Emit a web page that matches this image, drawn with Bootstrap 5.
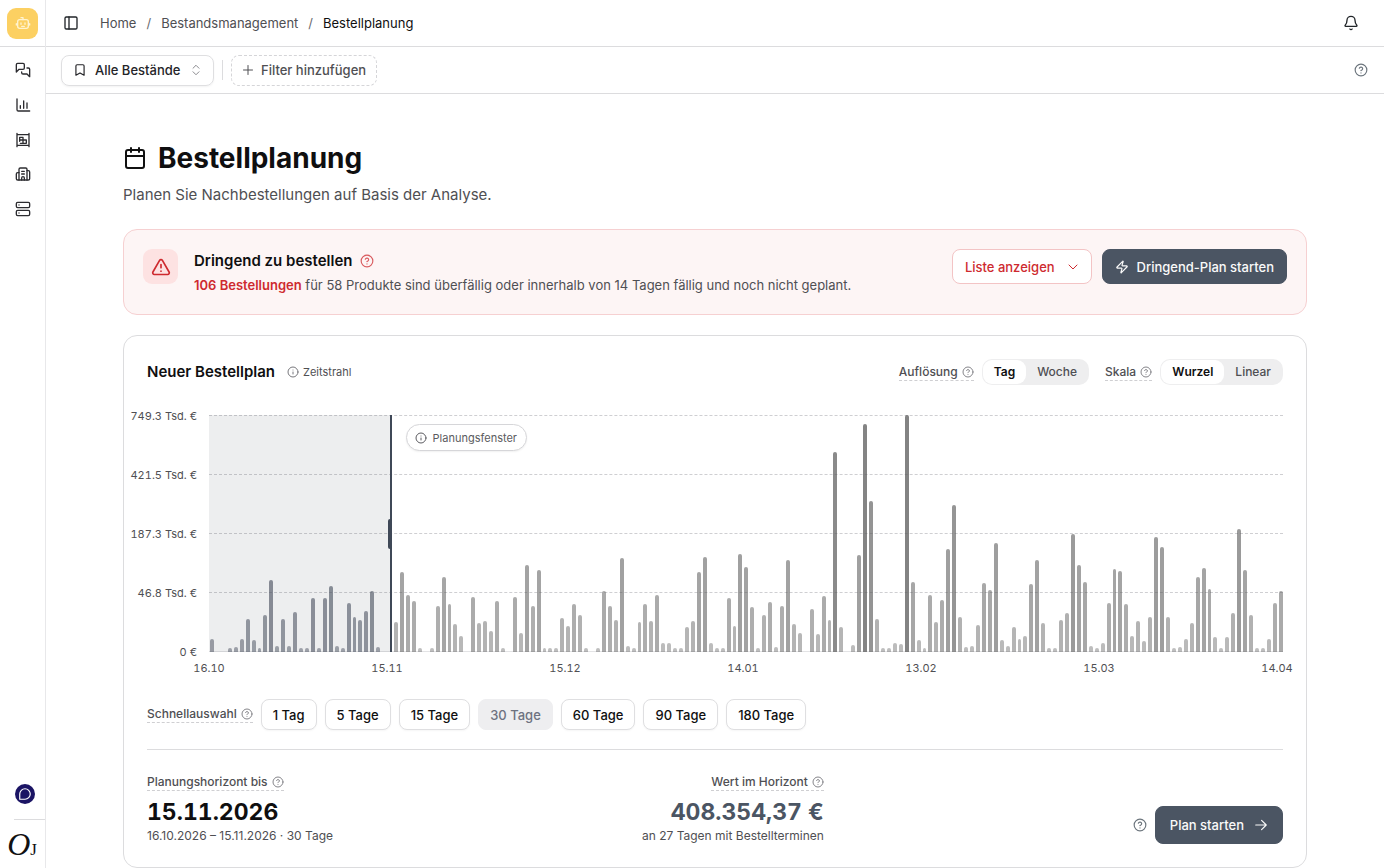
<!DOCTYPE html>
<html lang="de">
<head>
<meta charset="utf-8">
<meta name="viewport" content="width=device-width, initial-scale=1">
<title>Bestellplanung</title>
<link href="https://cdn.jsdelivr.net/npm/bootstrap@5.3.0/dist/css/bootstrap.min.css" rel="stylesheet">
<style>
  :root { --ink: #0f0f10; --body: #4f4f53; --line: #dcdcde; --slate: #4b5563; --red: #ce2a2f; }
  body { font-family: Inter, "Liberation Sans", sans-serif; font-size: 13px; line-height: 20px; color: var(--body); background: #fff; }
  svg.ico { fill: none; stroke: currentColor; stroke-width: 2; stroke-linecap: round; stroke-linejoin: round; flex: none; width: 16px; height: 16px; display: block; }
  svg.ico-12 { width: 12px; height: 12px; }
  svg.ico-14 { width: 14px; height: 14px; }
  svg.ico-20 { width: 20px; height: 20px; }
  svg.ico-24 { width: 24px; height: 24px; }
  a { color: inherit; text-decoration: none; }

  .side { width: 46px; border-right: 1px solid #e8e8ea; color: #2c2c30; height: 100vh; top: 0; }
  .side-top { height: 47px; border-bottom: 1px solid var(--line); }
  .bot { width: 31px; height: 31px; border-radius: 9px; background: #fcd062; color: #fff3cf; }
  .side-nav { padding-top: 15px; height: 170px; }
  .chat { width: 20px; height: 20px; background: #1b1464; color: #fff; margin-left: 4px; }
  .side-rule { width: 31px; border-top: 1px solid var(--line); margin: 15px 0 10px; }
  .brand { font-family: "Liberation Serif", serif; font-style: italic; font-size: 32px; line-height: 28px; color: #111; height: 38px; padding-right: 1px; }
  .brand small { font-size: 17px; font-style: normal; }

  .topbar { height: 47px; border-bottom: 1px solid var(--line); padding: 0 25px 0 17px; }
  .crumbs { --bs-breadcrumb-item-padding-x: 10px; --bs-breadcrumb-divider-color: #6b6b70; margin-left: 21px; }
  .crumbs .active { color: var(--ink); }
  .filterbar { height: 47px; border-bottom: 1px solid var(--line); padding: 0 16px 0 15px; gap: 8px; }
  .picker { height: 31px; border: 1px solid #dfdfe1; border-radius: 8px; padding: 0 11px; color: #242428; box-shadow: 0 1px 2px rgba(0,0,0,.05); }
  .picker select { appearance: none; border: 0; background: none; padding: 0; color: inherit; font-weight: 500; outline: 0; margin: 0 9px 0 8px; }
  .picker .ico:last-child { color: #8b8b90; }
  .divide { width: 1px; height: 20px; background: var(--line); }
  .add { height: 31px; border: 1px dashed #d5d5d8; border-radius: 8px; background: none; padding: 0 10px; gap: 7px; font-weight: 500; color: var(--body); }

  .content { padding: 46px 77px 0; }
  h1 { font-size: 28px; line-height: 36px; font-weight: 700; color: var(--ink); margin: 0; }
  .cal { stroke-width: 1.800; color: #111; }
  .title-row { gap: 11px; }
  .lead-in { font-size: 15px; line-height: 24px; margin: 7px 0 22px; }
  .urgent { background: #fdf5f5; border: 1px solid #f6d0d1; border-radius: 14px; padding: 19px; }
  .warn { width: 35px; height: 35px; border-radius: 9px; background: #fde2e2; color: var(--red); }
  .urgent h2 { font-size: 15px; line-height: 24px; font-weight: 600; color: var(--ink); margin: 0; }
  .urgent-text { margin-top: 2px; }
  .red { color: var(--red); }
  .acts { gap: 10px; }
  .b-act { height: 35px; border-radius: 8px; font-size: 13px; font-weight: 500; line-height: 20px; padding: 0 12px; gap: 8px; border: 1px solid #f3c4c5; background: #fff; color: var(--red); }
  .b-list { gap: 12px; }
  .b-dark { background: var(--slate); border-color: var(--slate); color: #fafafa; }
  .b-big { height: 38px; padding: 0 14px; gap: 10px; }

  .plan { border: 1px solid var(--line); border-radius: 14px; margin-top: 20px; padding: 23px; }
  .plan h2 { font-size: 15px; line-height: 24px; font-weight: 600; color: var(--ink); margin: 0; }
  .hint { width: fit-content; font-size: 12px; font-weight: 500; line-height: 16px; border-bottom: 1px dashed #cfcfd2; gap: 4px; color: var(--body); }
  .hint .ico { color: #85858a; }
  .tiny { font-size: 11px; line-height: 16px; }
  .tiny .ico { color: #77777c; }
  .seg { background: #eeeeef; border-radius: 10px; padding: 1px; height: 26px; }
  .seg label { font-size: 12px; font-weight: 500; line-height: 24px; border-radius: 9px; padding: 0 11px; cursor: pointer; }
  .seg .btn-check:checked + label { background: #fff; color: var(--ink); font-weight: 600; }

  .chart { margin: 30px 0 0 -14px; font-size: 11px; line-height: 16px; }
  .yaxis, .xaxis, .big { font-variant-numeric: tabular-nums; }
  .yaxis { width: 64px; margin: -7px 12px -8px 0; text-align: right; white-space: nowrap; }
  .yaxis span { display: flex; justify-content: flex-end; }
  .plot { height: 237px; }
  .rows div { border-top: 1px dashed #cfcfd2; height: 1px; }
  .rows div:last-child { border-top: 1px solid #e3e3e5; }
  .win { top: 0; bottom: 0; left: 0; width: 17%; background: rgba(75,85,99,.1); border-right: 2px solid #3f4857; }
  .grip { position: absolute; right: -2px; top: 44%; width: 4px; height: 30px; border-radius: 2px; background: #3f4857; }
  .bars i { flex: 1 1 0; min-width: 0; padding: 0 1px; }
  .bars i::before { content: ""; display: block; height: 100%; border-radius: 2px 2px 0 0; background: #555; opacity: var(--o); }
  .bars i.in::before { background: #4b5261; }
  .tip { left: 14px; margin-left: 17%; top: 9px; height: 27px; border: 1px solid #d6d6d9; border-radius: 14px; background: #fff; padding: 0 9px 0 8px; gap: 6px; color: #5b5b60; box-shadow: 0 1px 2px rgba(0,0,0,.06); }
  .xaxis { margin: 8px 0 0 76px; padding-right: calc((100% - 76px) / 181); }
  .xaxis span { width: 0; display: flex; justify-content: center; }

  .quick { margin-top: 23px; gap: 8px; }
  .quick button { height: 31px; border: 1px solid #dfdfe1; border-radius: 8px; background: #fff; color: var(--ink); font-weight: 500; padding: 0 11px; box-shadow: 0 1px 2px rgba(0,0,0,.04); }
  .quick button.on { background: #eeeef0; border-color: #eeeef0; color: #6d7280; box-shadow: none; }
  .foot { border-top: 1px solid var(--line); margin-top: 19px; padding-top: 24px; }
  .big { font-size: 23px; line-height: 32px; font-weight: 700; color: var(--ink); margin-top: 5px; }
  .big.slate { color: var(--slate); }
  .sub { font-size: 12px; line-height: 16px; }
</style>
</head>
<body>
<svg class="d-none" aria-hidden="true">
  <symbol id="q" viewBox="0 0 24 24"><circle cx="12" cy="12" r="10"/><path d="M9.1 9a3 3 0 0 1 5.8 1c0 2-3 3-3 3M12 17h.01"/></symbol>
  <symbol id="info" viewBox="0 0 24 24"><circle cx="12" cy="12" r="10"/><path d="M12 16v-4M12 8h.01"/></symbol>
</svg>
<div class="d-flex min-vh-100">
  <aside class="side sticky-top d-flex flex-column align-items-center flex-shrink-0">
    <div class="side-top w-100 d-flex align-items-center justify-content-center">
      <a href="#" class="bot d-flex align-items-center justify-content-center" aria-label="Assistent"><svg class="ico" viewBox="0 0 24 24"><path d="M12 7V4H9"/><rect x="4" y="7" width="16" height="13" rx="3"/><path d="M2 13v2M22 13v2M9 12v2M15 12v2M10 17h4"/></svg></a>
    </div>
    <nav class="side-nav d-flex flex-column justify-content-between">
      <a href="#" aria-label="Chat"><svg class="ico" viewBox="0 0 24 24"><path d="M14 9a2 2 0 0 1-2 2H6l-4 4V4a2 2 0 0 1 2-2h8a2 2 0 0 1 2 2z"/><path d="M18 9h2a2 2 0 0 1 2 2v11l-4-4h-6a2 2 0 0 1-2-2v-1"/></svg></a>
      <a href="#" aria-label="Analyse"><svg class="ico" viewBox="0 0 24 24"><path d="M3 3v16a2 2 0 0 0 2 2h17M8 17v-4M13 17V6M18 17V9"/></svg></a>
      <a href="#" aria-label="Lager"><svg class="ico" viewBox="0 0 24 24"><path d="M3 2v20M21 2v20M3 4h18M3 20h18M7 14V8h5v4h5v4M7 12h5M12 16v-4M8 17h9"/></svg></a>
      <a href="#" aria-label="Unternehmen"><svg class="ico" viewBox="0 0 24 24"><path d="M10 12h4M10 8h4M14 21v-3a2 2 0 0 0-4 0v3"/><path d="M6 10H4a2 2 0 0 0-2 2v7a2 2 0 0 0 2 2h16a2 2 0 0 0 2-2V9a2 2 0 0 0-2-2h-2"/><path d="M6 21V5a2 2 0 0 1 2-2h8a2 2 0 0 1 2 2v16"/></svg></a>
      <a href="#" aria-label="Daten"><svg class="ico" viewBox="0 0 24 24"><rect x="2" y="2" width="20" height="8" rx="2"/><rect x="2" y="14" width="20" height="8" rx="2"/><path d="M6 6h.01M6 18h.01"/></svg></a>
    </nav>
    <a href="#" class="chat rounded-circle d-flex align-items-center justify-content-center mt-auto" aria-label="Hilfe"><svg class="ico ico-14" viewBox="0 0 24 24"><path d="M3 21V12a9 9 0 1 1 9 9z"/></svg></a>
    <div class="side-rule align-self-end"></div>
    <a href="#" class="brand">O<small>J</small></a>
  </aside>

  <div class="flex-grow-1" style="min-width:0">
    <header class="topbar d-flex align-items-center">
      <button class="btn p-0 border-0" aria-label="Seitenleiste"><svg class="ico" viewBox="0 0 24 24"><rect x="3" y="3" width="18" height="18" rx="2"/><path d="M9 3v18"/></svg></button>
      <nav aria-label="breadcrumb"><ol class="breadcrumb crumbs mb-0">
        <li class="breadcrumb-item"><a href="#">Home</a></li>
        <li class="breadcrumb-item"><a href="#">Bestandsmanagement</a></li>
        <li class="breadcrumb-item active" aria-current="page">Bestellplanung</li>
      </ol></nav>
      <button class="btn p-0 border-0 ms-auto" aria-label="Benachrichtigungen"><svg class="ico" viewBox="0 0 24 24"><path d="M10.3 21a2 2 0 0 0 3.4 0"/><path d="M3.3 15.3A1 1 0 0 0 4 17h16a1 1 0 0 0 .7-1.7C19.4 14 18 12.500 18 8A6 6 0 0 0 6 8c0 4.500-1.400 6-2.700 7.300"/></svg></button>
    </header>

    <div class="filterbar d-flex align-items-center">
      <div class="picker d-flex align-items-center">
        <svg class="ico ico-14" viewBox="0 0 24 24"><path d="M19 21l-7-4-7 4V5a2 2 0 0 1 2-2h10a2 2 0 0 1 2 2z"/></svg>
        <select aria-label="Bestände"><option>Alle Bestände</option></select>
        <svg class="ico ico-12" viewBox="0 0 24 24"><path d="M6 15.500l6 6 6-6M6 8.500l6-6 6 6"/></svg>
      </div>
      <div class="divide"></div>
      <button class="add d-flex align-items-center"><svg class="ico ico-12" viewBox="0 0 24 24"><path d="M3 12h18M12 3v18"/></svg>Filter hinzufügen</button>
      <button class="btn p-0 border-0 ms-auto text-secondary" aria-label="Hilfe"><svg class="ico ico-14"><use href="#q"/></svg></button>
    </div>

    <main class="content">
      <div class="title-row d-flex align-items-center">
        <svg class="ico ico-24 cal" viewBox="0 0 24 24"><path d="M8 2v4M16 2v4M3 10h18"/><rect x="3" y="4" width="18" height="18" rx="2"/></svg>
        <h1>Bestellplanung</h1>
      </div>
      <p class="lead-in">Planen Sie Nachbestellungen auf Basis der Analyse.</p>

      <section class="urgent d-flex align-items-start">
        <div class="warn d-flex align-items-center justify-content-center flex-shrink-0 me-3"><svg class="ico ico-20" viewBox="0 0 24 24"><path d="M21.700 18l-8-14a2 2 0 0 0-3.400 0l-8 14A2 2 0 0 0 4 21h16a2 2 0 0 0 1.700-3zM12 9v4M12 17h.01"/></svg></div>
        <div class="flex-grow-1">
          <div class="d-flex align-items-center"><h2>Dringend zu bestellen</h2><svg class="ico ico-14 red ms-2 opacity-75"><use href="#q"/></svg></div>
          <div class="urgent-text"><strong class="red fw-semibold">106 Bestellungen</strong> für 58 Produkte sind überfällig oder innerhalb von 14 Tagen fällig und noch nicht geplant.</div>
        </div>
        <div class="acts d-flex flex-shrink-0">
          <button class="b-act b-list d-flex align-items-center">Liste anzeigen<svg class="ico ico-12" viewBox="0 0 24 24"><path d="M4 8l8 8 8-8"/></svg></button>
          <button class="b-act b-dark d-flex align-items-center"><svg class="ico ico-14" viewBox="0 0 24 24"><path d="M4 14a1 1 0 0 1-.8-1.600l9.900-10.200a.5.5 0 0 1 .9.500L12.100 8.700A1 1 0 0 0 13 10h7a1 1 0 0 1 .8 1.600l-9.900 10.200a.5.5 0 0 1-.9-.5l1.900-6A1 1 0 0 0 11 14z"/></svg>Dringend-Plan starten</button>
        </div>
      </section>

      <section class="plan">
        <div class="d-flex align-items-center flex-wrap">
          <h2>Neuer Bestellplan</h2>
          <span class="tiny d-flex align-items-center gap-1 ms-2 ps-1"><svg class="ico ico-12"><use href="#info"/></svg>Zeitstrahl</span>
          <div class="d-flex align-items-center ms-auto gap-2">
            <span class="hint d-flex align-items-center" id="res">Auflösung <svg class="ico ico-12"><use href="#q"/></svg></span>
            <div class="seg d-flex me-2" role="radiogroup" aria-labelledby="res">
              <input class="btn-check" type="radio" name="res" id="tag" checked><label for="tag">Tag</label>
              <input class="btn-check" type="radio" name="res" id="woche"><label for="woche">Woche</label>
            </div>
            <span class="hint d-flex align-items-center" id="skala">Skala <svg class="ico ico-12"><use href="#q"/></svg></span>
            <div class="seg d-flex" role="radiogroup" aria-labelledby="skala">
              <input class="btn-check" type="radio" name="skala" id="wurzel" checked><label for="wurzel">Wurzel</label>
              <input class="btn-check" type="radio" name="skala" id="linear"><label for="linear">Linear</label>
            </div>
          </div>
        </div>

        <div class="chart">
          <div class="d-flex">
            <div class="yaxis d-flex flex-column justify-content-between flex-shrink-0">
              <span>749.3 Tsd. €</span><span>421.5 Tsd. €</span><span>187.3 Tsd. €</span><span>46.8 Tsd. €</span><span>0 €</span>
            </div>
            <div class="plot position-relative flex-grow-1">
              <div class="rows h-100 d-flex flex-column justify-content-between"><div></div><div></div><div></div><div></div><div></div></div>
              <div class="win position-absolute"><span class="grip"></span></div>
              <div class="bars position-absolute top-0 start-0 w-100 h-100 d-flex align-items-end" id="bars"></div>
              <div class="tip position-absolute d-flex align-items-center"><svg class="ico ico-12"><use href="#info"/></svg>Planungsfenster</div>
            </div>
          </div>
          <div class="xaxis d-flex justify-content-between"><span>16.10</span><span>15.11</span><span>15.12</span><span>14.01</span><span>13.02</span><span>15.03</span><span>14.04</span></div>
        </div>

        <div class="quick d-flex flex-wrap align-items-center">
          <span class="hint d-flex align-items-center">Schnellauswahl <svg class="ico ico-12"><use href="#q"/></svg></span>
          <button>1 Tag</button><button>5 Tage</button><button>15 Tage</button><button class="on">30 Tage</button><button>60 Tage</button><button>90 Tage</button><button>180 Tage</button>
        </div>

        <div class="foot d-flex flex-wrap justify-content-between">
          <div>
            <div class="hint d-flex align-items-center">Planungshorizont bis <svg class="ico ico-12"><use href="#q"/></svg></div>
            <div class="big">15.11.2026</div>
            <div class="sub">16.10.2026 – 15.11.2026 · 30 Tage</div>
          </div>
          <div class="text-end">
            <div class="hint d-flex align-items-center ms-auto">Wert im Horizont <svg class="ico ico-12"><use href="#q"/></svg></div>
            <div class="big slate">408.354,37 €</div>
            <div class="sub">an 27 Tagen mit Bestellterminen</div>
          </div>
          <div class="d-flex align-items-center align-self-end gap-2">
            <svg class="ico ico-14 text-secondary"><use href="#q"/></svg>
            <button class="b-act b-dark b-big d-flex align-items-center">Plan starten<svg class="ico ico-14" viewBox="0 0 24 24"><path d="M3 12h18M13 4l8 8-8 8"/></svg></button>
          </div>
        </div>
      </section>
    </main>
  </div>
</div>
<script src="https://cdn.jsdelivr.net/npm/bootstrap@5.3.0/dist/js/bootstrap.bundle.min.js"></script>
<script>
  // Order value per day on the root scale; 238 is the top of the axis
  const days = [13,0,0,4,5,13,33,12,4,37,72,6,33,6,40,4,4,54,4,54,66,6,4,49,35,32,41,61,5,0,
    0,30,80,57,51,4,0,4,46,75,48,28,16,0,55,29,31,21,51,4,0,55,19,87,46,82,4,4,4,34,
    26,48,37,4,0,4,61,46,32,94,6,4,30,48,31,57,9,9,4,4,25,31,80,95,9,4,4,54,26,98,
    85,45,4,37,50,5,46,92,28,19,0,43,18,56,32,201,25,0,7,97,229,152,33,4,4,9,8,238,70,12,
    4,57,30,52,103,148,35,5,6,27,69,62,109,12,6,25,13,16,68,92,29,4,4,32,39,119,87,70,6,4,
    9,49,83,81,48,16,31,11,35,115,105,35,4,5,13,29,75,84,63,15,4,15,39,124,82,37,4,4,13,49,61];
  const bars = document.getElementById('bars');
  days.forEach((v, n) => {
    const bar = document.createElement('i');
    const inside = n < 31;
    if (inside) bar.className = 'in';
    bar.style.height = (v / 238 * 100) + '%';
    bar.style.setProperty('--o', (inside ? 0.48 : 0.36) + 0.37 * Math.pow(v / 238, 0.7));
    bars.append(bar);
  });
</script>
</body>
</html>
